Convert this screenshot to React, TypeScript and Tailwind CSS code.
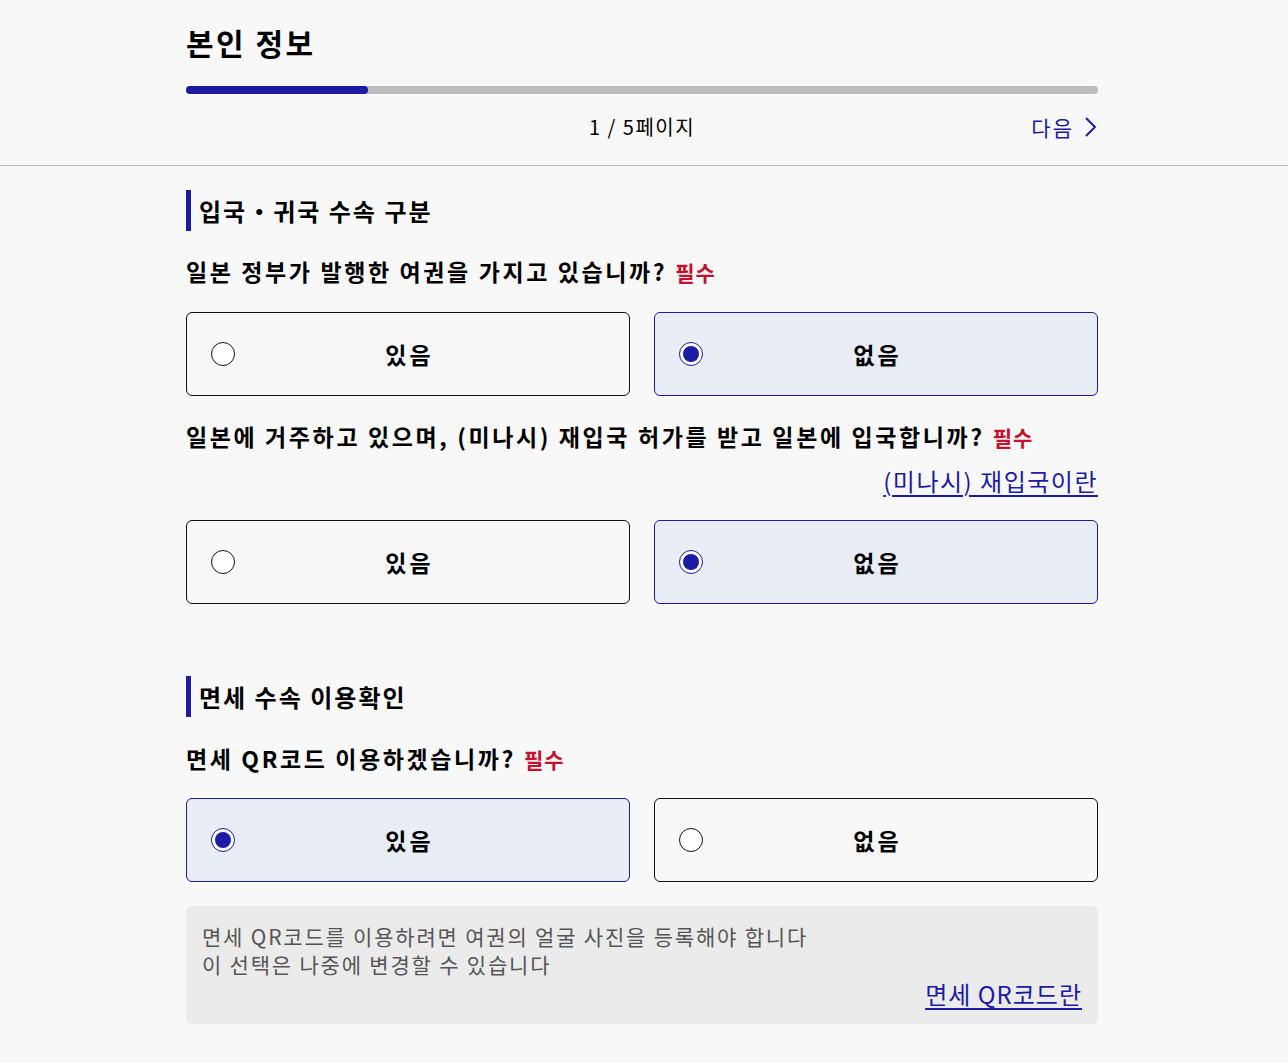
import React, { useState } from 'react';

const BLUE = '#1d1aa3';

type RadioProps = { label: string; checked: boolean; onClick: () => void };

const RadioBox: React.FC<RadioProps> = ({ label, checked, onClick }) => (
  <button
    onClick={onClick}
    className={`flex items-center h-[84px] rounded-md border px-6 text-left ${
      checked ? 'border-[#1d1aa3] bg-[#e9edf6]' : 'border-[#111] bg-[#f8f8f8]'
    }`}
  >
    {checked ? (
      <span className="flex w-6 h-6 items-center justify-center rounded-full border border-[#1d1aa3] bg-white">
        <span className="w-4 h-4 rounded-full bg-[#1d1aa3]"></span>
      </span>
    ) : (
      <span className="w-6 h-6 rounded-full border border-[#111] bg-white"></span>
    )}
    <span className="flex-1 pl-[3px] text-center text-[23px] font-bold leading-8 tracking-[3px] text-black">{label}</span>
    <span className="w-6"></span>
  </button>
);

const Required = () => (
  <span className="ml-2 text-[21px] font-bold leading-none tracking-[1px] text-[#c8102e]">필수</span>
);

const SectionTitle: React.FC<{ children: React.ReactNode }> = ({ children }) => (
  <h2 className="border-l-[5px] border-[#1d1aa3] pl-2 text-[24px] font-bold leading-[41px] tracking-[2px] text-black">
    {children}
  </h2>
);

const Question: React.FC<{ children: React.ReactNode }> = ({ children }) => (
  <p className="text-[23px] font-bold leading-8 tracking-[2.6px] text-black">
    {children}
    <Required />
  </p>
);

export default function App() {
  const [passport, setPassport] = useState<'yes' | 'no'>('no');
  const [reentry, setReentry] = useState<'yes' | 'no'>('no');
  const [qr, setQr] = useState<'yes' | 'no'>('yes');

  return (
    <div
      className="min-h-screen bg-[#f8f8f8]"
      style={{ fontFamily: '"Noto Sans CJK KR", "Noto Sans", sans-serif' }}
    >
      <header className="border-b border-[#bdbdbd]">
        <div className="mx-auto w-[916px] pr-1 pt-[22px] pb-6">
          <h1 className="text-[30px] font-bold leading-10 tracking-[2.5px] text-black">본인 정보</h1>
          <div className="mt-6 h-2 w-full rounded-full bg-[#bdbdbd]">
            <div className="h-2 w-1/5 rounded-full bg-[#1d1aa3]"></div>
          </div>
          <div className="relative mt-[19px] flex items-center justify-center">
            <span className="text-[20px] leading-7 tracking-[1.5px] text-black">1 / 5페이지</span>
            <button className="absolute right-0 flex items-center gap-[10px] text-[21px] leading-7 tracking-[2px] text-[#1d1aa3]">
              다음
              <svg width="14" height="22" viewBox="0 0 14 22" fill="none">
                <path d="M2 2l9 9-9 9" stroke={BLUE} strokeWidth="2" />
              </svg>
            </button>
          </div>
        </div>
      </header>

      <main className="mx-auto w-[916px] pr-1 pt-6 pb-10">
        <SectionTitle>입국・귀국 수속 구분</SectionTitle>
        <div className="mt-[24px]">
          <Question>일본 정부가 발행한 여권을 가지고 있습니까?</Question>
        </div>
        <div className="mt-[25px] grid grid-cols-2 gap-6">
          <RadioBox label="있음" checked={passport === 'yes'} onClick={() => setPassport('yes')} />
          <RadioBox label="없음" checked={passport === 'no'} onClick={() => setPassport('no')} />
        </div>

        <div className="mt-6">
          <Question>일본에 거주하고 있으며, (미나시) 재입국 허가를 받고 일본에 입국합니까?</Question>
        </div>
        <div className="mt-[13px] flex justify-end">
          <a href="#" className="text-[24px] leading-8 tracking-[1.5px] text-[#1d1aa3] underline underline-offset-4">
            (미나시) 재입국이란
          </a>
        </div>
        <div className="mt-[23px] grid grid-cols-2 gap-6">
          <RadioBox label="있음" checked={reentry === 'yes'} onClick={() => setReentry('yes')} />
          <RadioBox label="없음" checked={reentry === 'no'} onClick={() => setReentry('no')} />
        </div>

        <div className="mt-[72px]">
          <SectionTitle>면세 수속 이용확인</SectionTitle>
        </div>
        <div className="mt-[25px]">
          <Question>면세 QR코드 이용하겠습니까?</Question>
        </div>
        <div className="mt-[24px] grid grid-cols-2 gap-6">
          <RadioBox label="있음" checked={qr === 'yes'} onClick={() => setQr('yes')} />
          <RadioBox label="없음" checked={qr === 'no'} onClick={() => setQr('no')} />
        </div>

        <div className="mt-6 rounded-md bg-[#ebebeb] px-4 pt-4 pb-[14px]">
          <p className="text-[21px] leading-7 tracking-[1.8px] text-[#555]">면세 QR코드를 이용하려면 여권의 얼굴 사진을 등록해야 합니다</p>
          <p className="text-[21px] leading-7 tracking-[1.8px] text-[#555]">이 선택은 나중에 변경할 수 있습니다</p>
          <div className="flex justify-end">
            <a href="#" className="text-[24px] leading-8 tracking-[1px] text-[#1d1aa3] underline underline-offset-4">
              면세 QR코드란
            </a>
          </div>
        </div>
      </main>
    </div>
  );
}
